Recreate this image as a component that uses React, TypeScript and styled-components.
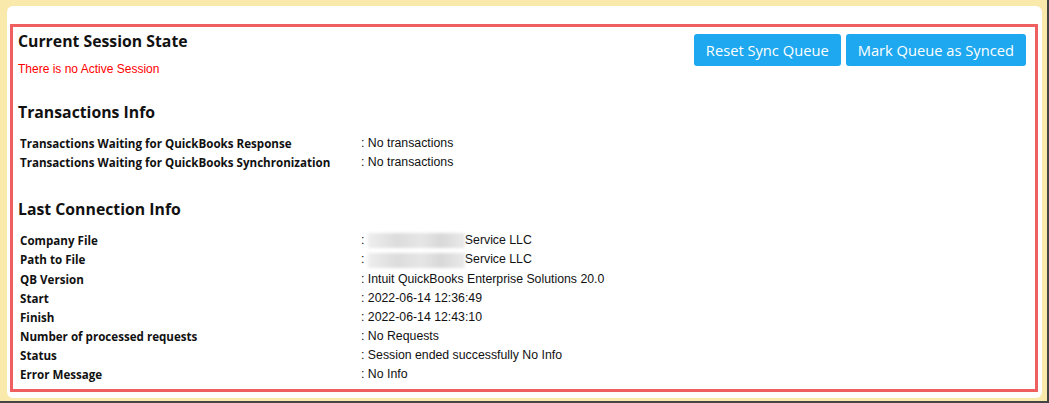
import React from 'react';
import styled, { createGlobalStyle } from 'styled-components';

type Row = { label: string; value: string; masked?: boolean };

const transactions: Row[] = [
	{ label: 'Transactions Waiting for QuickBooks Response', value: 'No transactions' },
	{ label: 'Transactions Waiting for QuickBooks Synchronization', value: 'No transactions' },
];

const connection: Row[] = [
	{ label: 'Company File', value: 'Service LLC', masked: true },
	{ label: 'Path to File', value: 'Service LLC', masked: true },
	{ label: 'QB Version', value: 'Intuit QuickBooks Enterprise Solutions 20.0' },
	{ label: 'Start', value: '2022-06-14 12:36:49' },
	{ label: 'Finish', value: '2022-06-14 12:43:10' },
	{ label: 'Number of processed requests', value: 'No Requests' },
	{ label: 'Status', value: 'Session ended successfully No Info' },
	{ label: 'Error Message', value: 'No Info' },
];

const InfoTable = ({ rows }: { rows: Row[] }) => (
	<Table>
		{rows.map((r) => (
			<React.Fragment key={r.label}>
				<Label>{r.label}</Label>
				<Value>
					:{' '}
					{r.masked && <Masked />}
					{r.value}
				</Value>
			</React.Fragment>
		))}
	</Table>
);

const App = () => {
	return (
		<>
			<GlobalStyle />
			<Frame>
				<Panel>
					<Outline>
						<TopRow>
							<div>
								<Heading>Current Session State</Heading>
								<Warning>There is no Active Session</Warning>
							</div>
							<Buttons>
								<ActionButton>Reset Sync Queue</ActionButton>
								<ActionButton>Mark Queue as Synced</ActionButton>
							</Buttons>
						</TopRow>

						<Section $gap={24}>
							<Heading>Transactions Info</Heading>
							<InfoTable rows={transactions} />
						</Section>

						<Section $gap={25}>
							<Heading>Last Connection Info</Heading>
							<InfoTable rows={connection} />
						</Section>
					</Outline>
				</Panel>
			</Frame>
		</>
	);
};

const GlobalStyle = createGlobalStyle`
	body {
		margin: 0;
		background: #fff;
		font-family: "Open Sans", "Noto Sans", sans-serif;
	}
`;

const Frame = styled.div`
	box-sizing: border-box;
	width: 1049px;
	height: 403px;
	background: #f9e9aa;
	border-right: 2px solid #444;
	border-bottom: 2px solid #444;
	padding: 6px 5px 3px 7px;
	display: flex;
`;

const Panel = styled.div`
	flex: 1;
	background: #fff;
	border-radius: 6px;
	padding: 18px 4px 6px 3px;
	display: flex;
`;

const Outline = styled.div`
	flex: 1;
	border: 3px solid #ef5f5f;
	padding: 2px 9px 0 5px;
`;

const TopRow = styled.div`
	display: flex;
	justify-content: space-between;
	align-items: flex-start;
`;

const Heading = styled.div`
	font-family: "Open Sans", "Noto Sans", sans-serif;
	font-size: 15.8px;
	font-weight: 700;
	color: #111;
	line-height: 24px;
`;

const Warning = styled.div`
	font-family: "Liberation Sans", Arial, sans-serif;
	font-size: 12px;
	color: #f00;
	margin-top: 9px;
`;

const Buttons = styled.div`
	display: flex;
	gap: 5px;
	margin-top: 5px;
`;

const ActionButton = styled.button`
	height: 32px;
	padding: 0 12px;
	border: none;
	border-radius: 3px;
	background: #1ea8ef;
	color: #fff;
	font-family: "Open Sans", "Noto Sans", sans-serif;
	font-size: 14.7px;
	cursor: pointer;
`;

const Section = styled.div<{ $gap: number }>`
	margin-top: ${({ $gap }) => $gap}px;
`;

const Table = styled.div`
	display: grid;
	grid-template-columns: 341px 1fr;
	margin: 10px 0 0 2px;
	line-height: 19.15px;
`;

const Label = styled.div`
	font-family: "Open Sans", "Noto Sans", sans-serif;
	font-size: 11.6px;
	font-weight: 700;
	color: #111;
`;

const Value = styled.div`
	font-family: "Liberation Sans", Arial, sans-serif;
	font-size: 12.3px;
	color: #111;
	display: flex;
	align-items: center;
	white-space: pre;
`;

const Masked = styled.span`
	display: inline-block;
	width: 97px;
	height: 15px;
	background: linear-gradient(90deg, #eee, #dcdcdc 30%, #e6e6e6 55%, #d8d8d8 75%, #eaeaea);
	filter: blur(1.5px);
`;

export default App;
